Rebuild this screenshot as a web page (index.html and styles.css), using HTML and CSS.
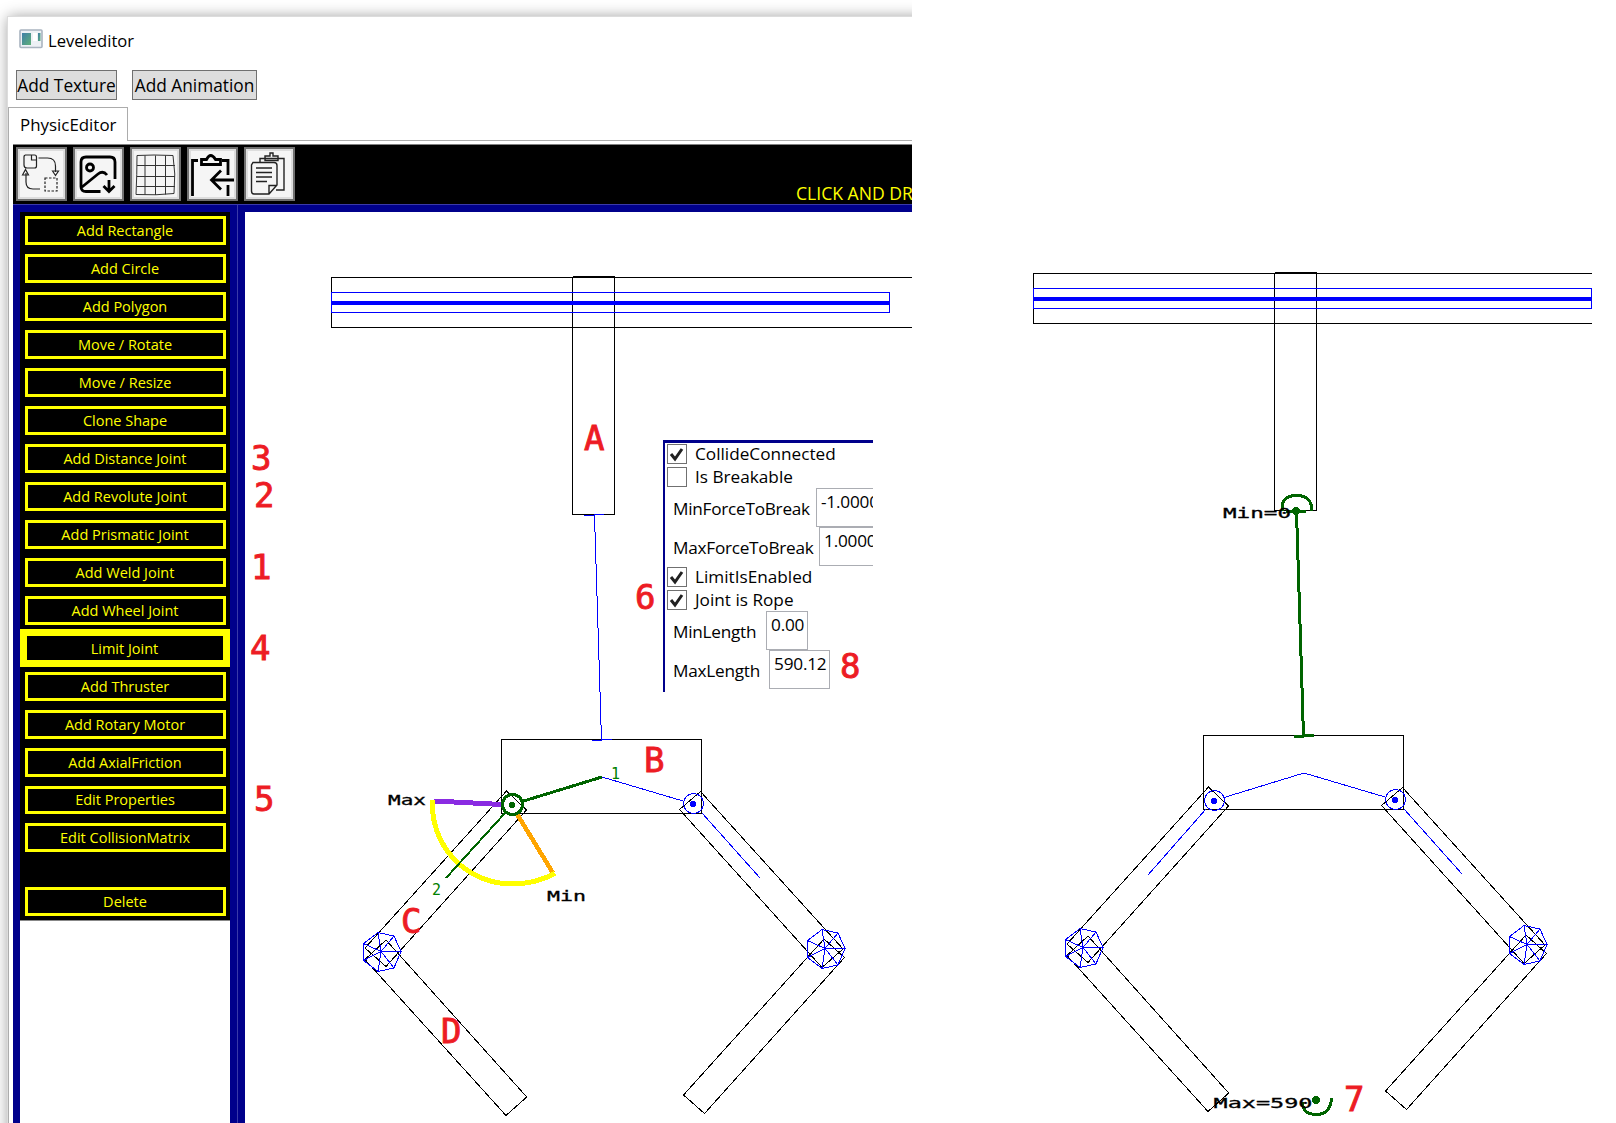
FILE: index.html
```html
<!DOCTYPE html>
<html lang="en">
<head>
<meta charset="utf-8">
<title>Leveleditor</title>
<link rel="stylesheet" href="styles.css">
</head>
<body>
<div class="shadow">
<main class="window">
  <header class="titlebar">
    <svg class="app-icon" width="24" height="20" viewBox="0 0 24 20">
      <defs><linearGradient id="g" x1="0" y1="0" x2="1" y2="1"><stop offset="0" stop-color="#3f7fa8"/><stop offset="1" stop-color="#5fb078"/></linearGradient></defs>
      <rect x="1" y="1" width="22" height="17.5" rx="1" fill="#edf1f5" stroke="#a9b4c0" stroke-width="1.6"/>
      <rect x="3" y="4" width="9" height="12" fill="url(#g)"/><rect x="14" y="4" width="4" height="8" fill="#fff"/><rect x="19" y="4" width="2.5" height="8" fill="url(#g)"/>
    </svg>
    <span>Leveleditor</span>
  </header>
  <div class="actions"><button class="action">Add Texture</button><button class="action wide">Add Animation</button></div>
  <div class="tabs"><span class="tab">PhysicEditor</span></div>
  <section class="editor">
    <div class="toolbar">
      <button class="tool"><svg viewBox="0 0 47 50" fill="none" stroke="#222" stroke-width="1.2">
        <path d="M7 6h9.500q2 0 2 2v9q0 2-2 2H9q-3 0-3-3V8q0-2 2-2M13.500 6v5h5M20.500 9h9q8 0 8 8v6M34.500 22l3 4.500 3-4.500zM22 40H15q-7 0-7-7V24M4.500 26L7.500 20.500l3 5.500z"/><path d="M27 29h12v13H27z" stroke-dasharray="2.500 1.500"/></svg></button>
      <button class="tool"><svg viewBox="0 0 47 50" fill="none" stroke="#000" stroke-width="2.800">
        <path d="M25.500 42.500H11q-5 0-5-5V13q0-5 5-5h24q5 0 5 5v17M7 38l16-13q5-4 9 1M34 31v11M28.500 37l5.500 5.500 5.500-5.500"/><circle cx="15" cy="18.500" r="3.500"/></svg></button>
      <button class="tool"><svg viewBox="0 0 47 50" fill="none" stroke="#333" stroke-width="1">
        <path d="M5 6.500q16-1 36 0 3 18 1 38-17 2-38 1 1-20 1-39zM13 6.500v39M23.500 6.500v39.500M33.500 6.500v39M5 16.500h38M5 27.500h38M5 37.500h38"/></svg></button>
      <button class="tool"><svg viewBox="0 0 47 50" fill="none" stroke="#000" stroke-width="2.800">
        <path d="M9 11.500H3.500V47M33 11.500h6V26M39 36v11"/><path d="M12.500 15.500v-5h5q4-8 9 0h5v5z"/><path d="M45 31H23M32 21.500L22.500 31l9.500 9.500"/></svg></button>
      <button class="tool"><svg viewBox="0 0 47 50" fill="none" stroke="#222" stroke-width="1.400">
        <path d="M14 13V9.500h6M32 9.500h6V41h-8M7 13.500h21q3 0 3 3V36l-8 9H8q-2.500 0-2.500-3V16zM23 45v-8.500h8M10 19h16M10 23.500h16M10 28h16M10 32.500h11"/><path d="M19 7h5V4h3v3h5v4.500H19zM19 9.500h13"/></svg></button>
      <span class="hint">CLICK AND DR</span>
    </div>
    <div class="workspace">
      <aside class="sidebar">
        <nav class="menu">
          <button>Add Rectangle</button><button>Add Circle</button><button>Add Polygon</button><button>Move / Rotate</button><button>Move / Resize</button><button>Clone Shape</button><button>Add Distance Joint</button><button>Add Revolute Joint</button><button>Add Prismatic Joint</button><button>Add Weld Joint</button><button>Add Wheel Joint</button><button class="active">Limit Joint</button><button>Add Thruster</button><button>Add Rotary Motor</button><button>Add AxialFriction</button><button class="short">Edit Properties</button><button>Edit CollisionMatrix</button><button class="delete">Delete</button>
        </nav>
      </aside>
      <div class="splitter"></div>
      <div class="canvas"></div>
    </div>
  </section>
</main>
</div>

<section class="props">
  <label class="check"><i class="box"><svg viewBox="0 0 18 18"><path d="M3 9l4 5 7-10"/></svg></i>CollideConnected</label>
  <label class="check"><i class="box"></i>Is Breakable</label>
  <div class="field"><span>MinForceToBreak</span><div class="input w1">-1.0000</div></div>
  <div class="field"><span>MaxForceToBreak</span><div class="input w2">1.0000</div></div>
  <label class="check"><i class="box"><svg viewBox="0 0 18 18"><path d="M3 9l4 5 7-10"/></svg></i>LimitIsEnabled</label>
  <label class="check"><i class="box"><svg viewBox="0 0 18 18"><path d="M3 9l4 5 7-10"/></svg></i>Joint is Rope</label>
  <div class="field"><span>MinLength</span><div class="input w3">0.00</div></div>
  <div class="field"><span>MaxLength</span><div class="input w4">590.12</div></div>
</section>

<svg class="scene" width="1616" height="1123" viewBox="0 0 1616 1123">
  <defs>
    <g id="wheel"><path d="M20 0L13-15.500-3-19-17.500-8v17L-3 20 13 16.500zM0 0H20M0 0L13-15.500M0 0L-3-19M0 0L-17.500-8M0 0L-17.500 9M0 0L-3 20M0 0L13 16.500"/></g>
    <g id="crane">
      <g class="line"><path d="M572.500 277v237.500h42V277M572.500 277h42M501.500 739.500h200v74h-200z"/><path d="M573 277h42" stroke-width="2"/>
        <path d="M506.500 791L526.500 810 386 966.500 365 948zM386 940L526.700 1097 506 1115.500 365 959.500z"/>
        <path d="M700.500 791.500L679.500 809.500 822 967.500 843 949zM824 939L844.500 957.500 704.500 1113.500 683.500 1095z"/></g>
      <g class="blue"><path d="M331.500 292.500h558v20h-558z"/><path d="M332 303h558" stroke-width="4"/>
        <path d="M602 777L683 801M702 813L760 878"/><circle cx="693.500" cy="803.500" r="10"/><circle cx="693" cy="804" r="3" fill="#00f" stroke="none"/>
        <use href="#wheel" x="381" y="951.500"/><use href="#wheel" x="825" y="948.500"/></g>
    </g>
  </defs>

  <path class="line" d="M912 277.500H331.500v50H912"/>
  <use href="#crane"/>
  <path class="blue" d="M584 515.500h10M594 514.500h10M594.500 515L601.500 740M592 740.500h10M601 739.500h11"/>
  <g fill="none" shape-rendering="crispEdges">
    <path d="M434 801L502 804.500" stroke="#8a2be2" stroke-width="5"/>
    <path d="M517 814L553 873" stroke="orange" stroke-width="4.500"/>
    <path d="M432.500 800A79.500 79.500 0 0 0 512 884Q535 884 555 873.500" stroke="#ff0" stroke-width="5"/>
    <path d="M522 801.500L602 777" stroke="#006400" stroke-width="3"/><path d="M505 813L446 878" stroke="#006400" stroke-width="2"/>
    <circle cx="512.500" cy="804.500" r="10" stroke="#006400" stroke-width="3"/><circle cx="512" cy="805" r="3" fill="#006400"/>
  </g>
  <g class="mono">
    <text x="388" y="805" textLength="38" lengthAdjust="spacingAndGlyphs">Max</text>
    <text x="547" y="900.500" textLength="39" lengthAdjust="spacingAndGlyphs">Min</text>
    <text x="611" y="778.500" class="index">1</text><text x="432" y="895" class="index">2</text>
  </g>

  <path class="line" d="M1592 273.500H1033.500v50H1592"/>
  <use href="#crane" x="702" y="-4"/>
  <g class="blue"><path d="M1304 773L1224 797.500M1206 809L1148 875"/><circle cx="1214.500" cy="800.500" r="10"/><circle cx="1214" cy="801" r="3" fill="#00f" stroke="none"/></g>
  <g class="rope"><path d="M1296.500 511L1303.500 736M1286 511h20M1294 736.500h10M1303 735.500h11M1282 511v-4Q1283 495.500 1296.500 495.500T1311.500 507v4M1302.500 1102Q1302.500 1114.500 1316.500 1114.500T1331.500 1098"/><circle cx="1296" cy="511" r="4" fill="#006400" stroke="none"/><circle cx="1316" cy="1100" r="4" fill="#006400" stroke="none"/></g>
  <g class="mono"><text x="1223" y="517.500" textLength="68" lengthAdjust="spacingAndGlyphs">Min=0</text><text x="1213.500" y="1108" textLength="99" lengthAdjust="spacingAndGlyphs">Max=590</text></g>

  <g class="notes">
    <text x="584" y="450">A</text><text x="644" y="772">B</text><text x="401" y="932.500">C</text><text x="441" y="1043">D</text>
    <text x="251" y="469.500">3</text><text x="254" y="507">2</text><text x="251" y="578.500">1</text><text x="250" y="660">4</text><text x="254" y="811">5</text>
    <text x="635" y="609">6</text><text x="840" y="678">8</text><text x="1344" y="1111">7</text>
  </g>
</svg>
</body>
</html>
```
FILE: styles.css
```css
* { box-sizing: border-box; }
body { margin: 0; width: 1616px; height: 1123px; overflow: hidden; position: relative; background: #fff; color: #000; font: 17.2px/24px "Open Sans", "Noto Sans", sans-serif; }
button { font: inherit; padding: 0; margin: 0; white-space: nowrap; }
.shadow { width: 912px; height: 1123px; padding: 17px 0 0 8px; overflow: hidden; }
.window { width: 1000px; height: 1200px; background: #fff; box-shadow: 0 0 0 1px #dcdcdc, 0 0 14px #999; }
.titlebar { height: 53px; padding: 12px 0 0 11px; display: flex; gap: 5px; font-size: 16.6px; line-height: 24px; }
.app-icon { display: block; }
.actions { height: 37px; padding-left: 8px; display: flex; gap: 15px; }
.action { width: 101px; height: 30px; border: 1px solid #707070; background: #ddd; font-size: 17.3px; line-height: 29px; }
.wide { width: 125px; }
.tabs { height: 34px; display: flex; border-bottom: 1px solid #acacac; }
.tab { width: 120px; height: 34px; border: 1px solid #acacac; border-bottom: 0; background: #fff; padding-left: 11px; font-size: 16.9px; line-height: 33px; white-space: nowrap; }
.editor { border-left: 1px solid #acacac; padding: 3px 0 0 4px; }
.toolbar { height: 60px; border-top: 1px solid #808080; background: #000; display: flex; gap: 6px; padding: 2px 0 0 3px; }
.tool { width: 51px; height: 54px; border: 2px solid #707070; background: #f5f5f5; box-shadow: inset 0 0 0 2px #ddd; flex: none; }
.tool svg { display: block; width: 47px; height: 50px; }
.hint { color: #ff0; margin: 34px 0 0 495px; font-size: 17.6px; line-height: 24px; white-space: nowrap; }
.workspace { height: 1000px; display: flex; background: #00008b; border-top: 1px solid #3a3aa8; }
.sidebar { width: 217px; margin-top: 7px; margin-left: 7px; padding-right: 7px; flex: none; background: linear-gradient(#fff, #fff) no-repeat 0 0 / 210px 100%; }
.menu { width: 210px; height: 709px; background: #000; padding: 4px 4px 0 5px; display: flex; flex-direction: column; gap: 9px; border-bottom: 1px solid #888; }
.menu button { height: 29px; flex: none; border: 3px solid #ff0; background: #000; color: #ff0; font-size: 14.5px; line-height: 24px; padding-right: 1px; }
.menu .active { width: 210px; height: 38px; margin: -5px -4px -4px -5px; border-width: 7px; line-height: 25px; }
.menu .short { height: 28px; line-height: 22px; }
.menu .delete { margin-top: 26px; }
.splitter { width: 8px; flex: none; border-left: 1px solid #3a3aa8; }
.canvas { flex: 1; margin-top: 7px; background: #fff; }

.scene { position: absolute; left: 0; top: 0; }
.line { fill: none; stroke: #000; stroke-width: 1; shape-rendering: crispEdges; }
.blue { fill: none; stroke: #00f; stroke-width: 1; shape-rendering: crispEdges; }
.rope { fill: none; stroke: #006400; stroke-width: 3; shape-rendering: crispEdges; }
.mono { font: 14px "DejaVu Sans Mono", monospace; stroke: #000; stroke-width: .3px; }
.index { font-size: 15px; fill: #008000; stroke: none; }
.notes { font: 34px "DejaVu Sans Mono", monospace; fill: #ed1c24; stroke: #ed1c24; stroke-width: .9px; }

.props { position: absolute; left: 663px; top: 440px; width: 210px; height: 252px; overflow: hidden; border: solid #00008b; border-width: 3px 0 0 2px; background: #fff; padding-top: 1px; }
.check { height: 23px; padding-left: 2px; display: flex; gap: 8px; line-height: 20px; white-space: nowrap; }
.check + .field { margin-top: -2px; }
.box { width: 20px; height: 20px; border: 1px solid #707070; background: #fff; }
.box svg { display: block; width: 18px; height: 18px; fill: none; stroke: #212121; stroke-width: 3; }
.field { height: 39px; padding-left: 8px; display: flex; white-space: nowrap; }
.field + .check { margin-top: 1px; }
.field span { line-height: 41px; letter-spacing: -.25px; }
.input { height: 39px; border: 1px solid #abadb3; background: #fff; padding-left: 4px; line-height: 26px; letter-spacing: -.2px; position: absolute; }
.w1 { left: 151px; width: 100px; }
.w2 { left: 154px; width: 100px; }
.w3 { left: 101px; width: 42px; }
.w4 { left: 104px; width: 61px; }
```
